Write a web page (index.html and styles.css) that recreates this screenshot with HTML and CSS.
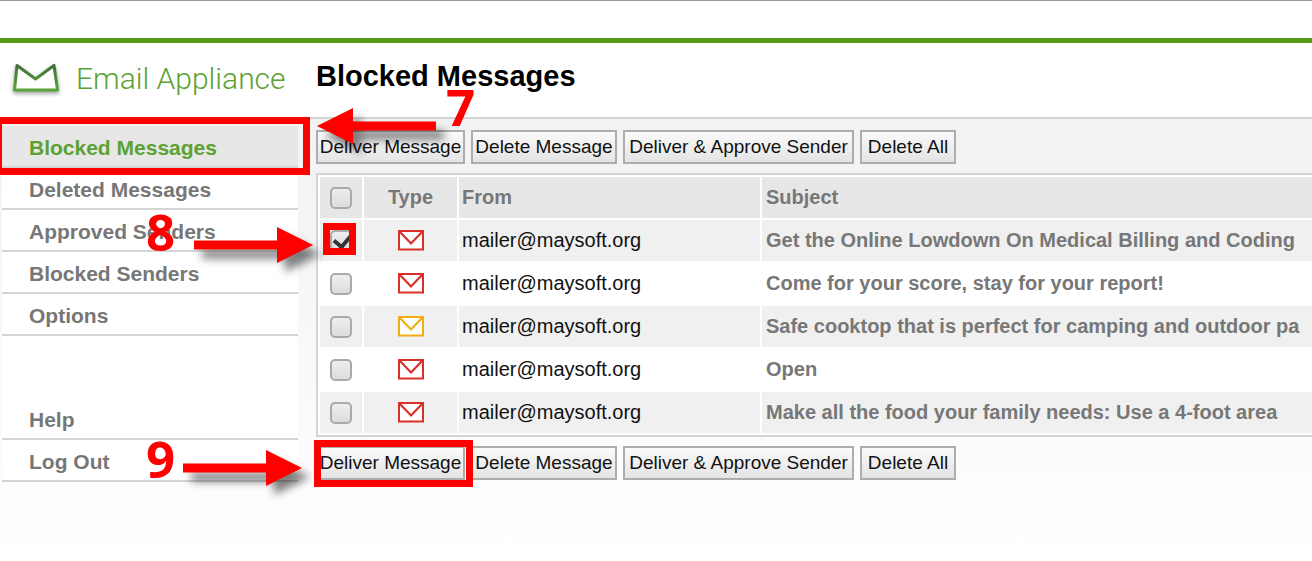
FILE: index.html
```html
<!DOCTYPE html>
<html lang="en">
<head>
    <meta charset="UTF-8">
    <meta name="viewport" content="width=device-width, initial-scale=1.0">
    <title>Email Appliance - Blocked Messages</title>
    <link rel="stylesheet" href="styles.css">
</head>
<body>

    <!-- Shared shapes -->
    <svg class="defs" width="0" height="0" aria-hidden="true">
        <symbol id="envelope" viewBox="0 0 26 21">
            <path d="M1 1h24v18.500H1z" fill="#fff" stroke="currentColor" stroke-width="2"/>
            <path d="M1.500 1.500L13 13.500L24.500 1.500" fill="none" stroke="currentColor" stroke-width="2.200"/>
        </symbol>
        <symbol id="arrow" viewBox="0 0 120 36">
            <path d="M0 13.500H83V0L119 18L83 36V22.500H0z" fill="#f00"/>
        </symbol>
    </svg>

    <div class="top-bar"></div>

    <header class="header">
        <a class="logo" href="#">
            <svg width="56" height="42" viewBox="0 0 56 42" aria-hidden="true">
                <defs>
                    <linearGradient id="logoGreen" x1="0" y1="0" x2="0" y2="1">
                        <stop offset="0" stop-color="#41703c"/>
                        <stop offset="1" stop-color="#5ba53a"/>
                    </linearGradient>
                </defs>
                <path class="logo-mark" d="M9 8.500L27.500 22L46 8.500L49.500 33H6.500z" fill="#fff" stroke="url(#logoGreen)" stroke-width="3" stroke-linejoin="round"/>
            </svg>
            <span>Email Appliance</span>
        </a>
        <h1>Blocked Messages</h1>
    </header>

    <div class="page">
        <nav class="sidebar">
            <ul>
                <li class="active"><a href="#">Blocked Messages</a></li>
                <li><a href="#">Deleted Messages</a></li>
                <li><a href="#">Approved Senders</a></li>
                <li><a href="#">Blocked Senders</a></li>
                <li><a href="#">Options</a></li>
            </ul>
            <ul>
                <li><a href="#">Help</a></li>
                <li><a href="#">Log Out</a></li>
            </ul>
        </nav>

        <main class="content">
            <div class="toolbar">
                <button type="button">Deliver Message</button>
                <button type="button">Delete Message</button>
                <button type="button">Deliver &amp; Approve Sender</button>
                <button type="button">Delete All</button>
            </div>

            <table>
                <colgroup>
                    <col class="col-check">
                    <col class="col-type">
                    <col class="col-from">
                    <col>
                </colgroup>
                <thead>
                    <tr>
                        <th class="center"><input type="checkbox" aria-label="Select all"></th>
                        <th class="center">Type</th>
                        <th>From</th>
                        <th>Subject</th>
                    </tr>
                </thead>
                <tbody>
                    <tr>
                        <td class="center"><input type="checkbox" aria-label="Select message 1" checked></td>
                        <td class="center"><svg class="mail spam"><use href="#envelope"/></svg></td>
                        <td>mailer@maysoft.org</td>
                        <td class="subject">Get the Online Lowdown On Medical Billing and Coding</td>
                    </tr>
                    <tr>
                        <td class="center"><input type="checkbox" aria-label="Select message 2"></td>
                        <td class="center"><svg class="mail spam"><use href="#envelope"/></svg></td>
                        <td>mailer@maysoft.org</td>
                        <td class="subject">Come for your score, stay for your report!</td>
                    </tr>
                    <tr>
                        <td class="center"><input type="checkbox" aria-label="Select message 3"></td>
                        <td class="center"><svg class="mail bulk"><use href="#envelope"/></svg></td>
                        <td>mailer@maysoft.org</td>
                        <td class="subject">Safe cooktop that is perfect for camping and outdoor pa</td>
                    </tr>
                    <tr>
                        <td class="center"><input type="checkbox" aria-label="Select message 4"></td>
                        <td class="center"><svg class="mail spam"><use href="#envelope"/></svg></td>
                        <td>mailer@maysoft.org</td>
                        <td class="subject">Open</td>
                    </tr>
                    <tr>
                        <td class="center"><input type="checkbox" aria-label="Select message 5"></td>
                        <td class="center"><svg class="mail spam"><use href="#envelope"/></svg></td>
                        <td>mailer@maysoft.org</td>
                        <td class="subject">Make all the food your family needs: Use a 4-foot area</td>
                    </tr>
                </tbody>
            </table>

            <div class="toolbar">
                <button type="button">Deliver Message</button>
                <button type="button">Delete Message</button>
                <button type="button">Deliver &amp; Approve Sender</button>
                <button type="button">Delete All</button>
            </div>
        </main>
    </div>

    <!-- Step callouts drawn over the page -->
    <div class="frame frame-nav"></div>
    <svg class="arrow arrow-7"><use href="#arrow" transform="rotate(180 60 18)"/></svg>
    <span class="step step-7">7</span>

    <div class="frame frame-check"></div>
    <svg class="arrow arrow-8"><use href="#arrow"/></svg>
    <span class="step step-8">8</span>

    <div class="frame frame-button"></div>
    <svg class="arrow arrow-9"><use href="#arrow"/></svg>
    <span class="step step-9">9</span>

</body>
</html>
```

FILE: styles.css
```css
* {
    box-sizing: border-box;
}

body {
    position: relative;
    margin: 0;
    font-family: "Liberation Sans", Arial, sans-serif;
    font-size: 20px;
    color: #111;
    background: #fff;
    overflow: hidden;
}

ul {
    list-style: none;
    margin: 0;
    padding: 0;
}

.defs {
    position: absolute;
}

.top-bar {
    height: 43px;
    border-top: 1px solid #999;
    border-bottom: 5px solid #539a17;
}

/* Header */
.header {
    display: flex;
    align-items: center;
    height: 76px;
    padding: 0 0 4px 8px;
    border-bottom: 2px solid #d4d4d4;
}

.logo {
    display: flex;
    align-items: center;
    gap: 12px;
    width: 308px;
    flex: none;
    color: #5ba232;
    font-family: Roboto, sans-serif;
    font-weight: 300;
    font-size: 30px;
    text-decoration: none;
    white-space: nowrap;
}

.logo-mark {
    filter: drop-shadow(0 2px 2px rgba(0, 0, 0, 0.4));
}

h1 {
    margin: 0;
    padding-bottom: 4px;
    font-size: 29px;
    color: #000;
    white-space: nowrap;
}

/* Page body */
.page {
    display: flex;
    gap: 18px;
    min-height: calc(100vh - 119px);
    padding: 7px 0 0 2px;
    background: linear-gradient(#f2f2f2, #fff);
}

.sidebar {
    width: 296px;
    flex: none;
    align-self: flex-start;
    display: flex;
    flex-direction: column;
    gap: 62px;
    background: #fff;
}

.sidebar li {
    height: 42px;
    border-bottom: 2px solid #d4d4d4;
}

.sidebar a {
    display: block;
    padding-left: 27px;
    line-height: 43px;
    font-size: 21px;
    font-weight: bold;
    color: #777;
    text-decoration: none;
}

.sidebar .active {
    background: #e7e7e7;
}

.sidebar .active a {
    color: #5ba232;
}

.content {
    flex: 1;
    min-width: 0;
    padding-top: 4px;
}

.toolbar {
    display: grid;
    grid-template-columns: 149px 146px 231px 96px;
    gap: 6px;
}

button {
    height: 34px;
    padding: 0;
    font-family: inherit;
    font-size: 19px;
    color: #111;
    white-space: nowrap;
    background: linear-gradient(#fafafa, #e4e4e4);
    border: 2px solid #adadad;
}

/* Message list, runs off the right edge */
table {
    width: calc(100% + 2px);
    margin: 9px 0;
    table-layout: fixed;
    border-spacing: 2px;
    background: #fff;
    border: 2px solid #d4d4d4;
    border-right: none;
}

.col-check {
    width: 42px;
}

.col-type {
    width: 93px;
}

.col-from {
    width: 301px;
}

th, td {
    height: 41px;
    padding: 0 3px;
    text-align: left;
    white-space: nowrap;
    overflow: hidden;
}

th {
    background: #e7e7e7;
    color: #777;
}

tbody tr:nth-child(odd) td {
    background: #f0f0f0;
}

.subject, th:last-child {
    padding-left: 4px;
}

.subject {
    color: #777;
    font-weight: bold;
}

.center {
    text-align: center;
}

input[type="checkbox"] {
    appearance: none;
    display: block;
    width: 22px;
    height: 22px;
    margin: 0 auto;
    border: 2px solid #aaa;
    border-radius: 5px;
    background: linear-gradient(#eee, #dcdcdc);
}

input[type="checkbox"]:checked::before {
    content: "";
    display: block;
    width: 8px;
    height: 14px;
    margin: -1px 0 0 5px;
    border: solid #333;
    border-width: 0 4px 4px 0;
    transform: translateY(-1px) rotate(40deg);
}

.mail {
    display: block;
    width: 26px;
    height: 21px;
    margin: 0 auto;
}

.spam {
    color: #db2f2a;
}

.bulk {
    color: #f0ae12;
}

/* Callouts */
.frame {
    position: absolute;
    border: 7px solid #f00;
}

.frame-nav {
    left: -5px;
    top: 117px;
    width: 315px;
    height: 58px;
}

.frame-check {
    left: 323px;
    top: 223px;
    width: 33px;
    height: 32px;
}

.frame-button {
    left: 314px;
    top: 440px;
    width: 159px;
    height: 47px;
}

.arrow {
    position: absolute;
    width: 120px;
    height: 36px;
    overflow: visible;
    filter: drop-shadow(8px 9px 4px rgba(0, 0, 0, 0.5));
}

.arrow-7 {
    left: 316px;
    top: 108px;
}

.arrow-8 {
    left: 194px;
    top: 227px;
}

.arrow-9 {
    left: 183px;
    top: 450px;
}

.step {
    position: absolute;
    font-family: "Open Sans", sans-serif;
    font-size: 51px;
    font-weight: 700;
    line-height: 50px;
    color: #f00;
}

.step-7 {
    left: 446px;
    top: 81px;
}

.step-8 {
    left: 146px;
    top: 206px;
}

.step-9 {
    left: 146px;
    top: 433px;
}
```
